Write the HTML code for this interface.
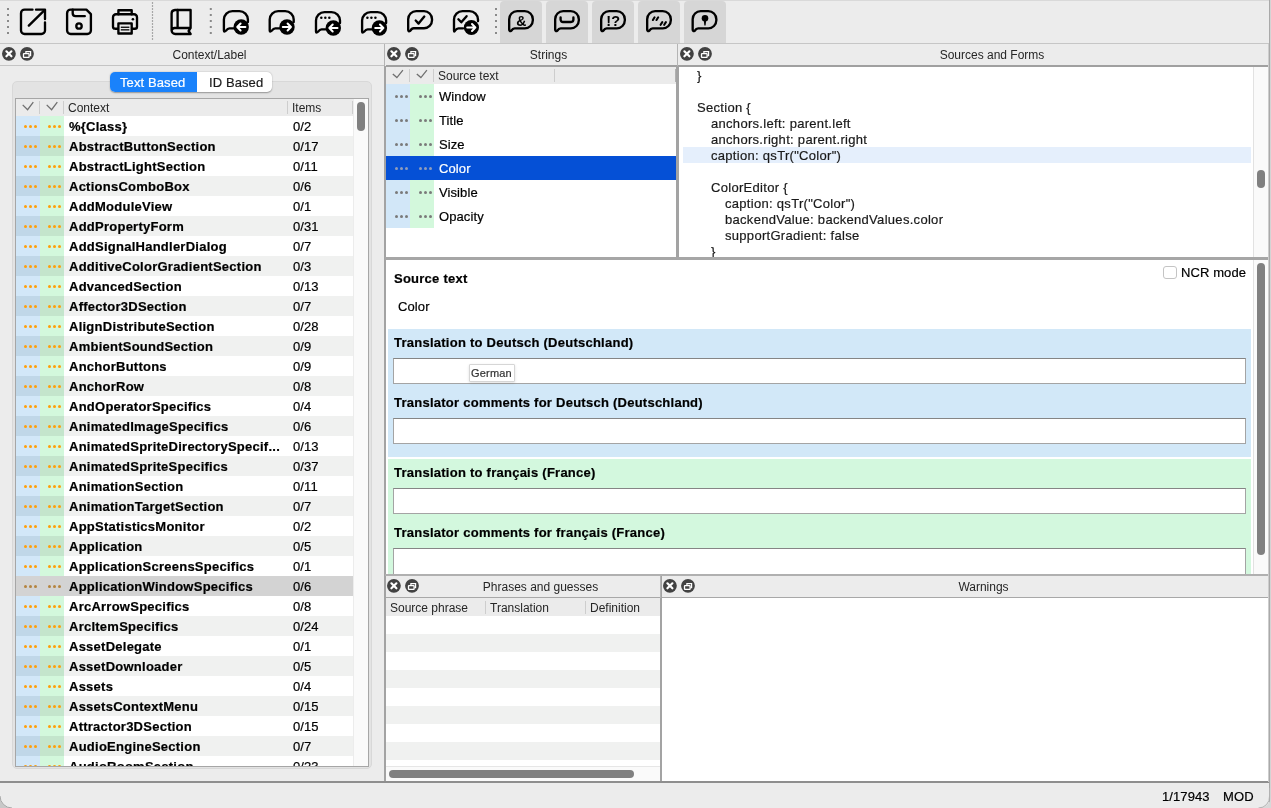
<!DOCTYPE html><html><head><meta charset="utf-8"><style>
*{box-sizing:border-box}
html,body{margin:0;padding:0;width:1271px;height:808px;overflow:hidden;background:#ececec;font-family:"Liberation Sans",sans-serif;color:#000}
.a{position:absolute}
.t{position:absolute;white-space:pre;line-height:1;-webkit-text-stroke:0.2px currentColor}
.dot{position:absolute;border-radius:50%;display:block}
.title{position:absolute;font-size:12px;color:#262626;text-align:center;line-height:1;letter-spacing:0}
#root{position:absolute;left:0;top:0;width:1271px;height:808px;will-change:transform}
</style></head><body><div id="root">

<div class="a" style="left:0px;top:0px;width:1271px;height:1px;background:#d9d9d9;"></div>
<div class="a" style="left:0px;top:43px;width:1271px;height:1px;background:#c6c6c6;"></div>
<div class="a" style="left:500px;top:1px;width:42px;height:42px;background:#d6d6d6;border-radius:4px 4px 0 0"></div>
<div class="a" style="left:546px;top:1px;width:42px;height:42px;background:#d6d6d6;border-radius:4px 4px 0 0"></div>
<div class="a" style="left:592px;top:1px;width:42px;height:42px;background:#d6d6d6;border-radius:4px 4px 0 0"></div>
<div class="a" style="left:638px;top:1px;width:42px;height:42px;background:#d6d6d6;border-radius:4px 4px 0 0"></div>
<div class="a" style="left:684px;top:1px;width:42px;height:42px;background:#d6d6d6;border-radius:4px 4px 0 0"></div>
<svg class="a" style="left:0;top:0" width="730" height="44" viewBox="0 0 730 44"><rect x="7" y="8" width="2" height="2" fill="#8a8a8a"/><rect x="7" y="14" width="2" height="2" fill="#8a8a8a"/><rect x="7" y="20" width="2" height="2" fill="#8a8a8a"/><rect x="7" y="26" width="2" height="2" fill="#8a8a8a"/><rect x="7" y="32" width="2" height="2" fill="#8a8a8a"/><rect x="209.8" y="8" width="2" height="2" fill="#8a8a8a"/><rect x="209.8" y="14" width="2" height="2" fill="#8a8a8a"/><rect x="209.8" y="20" width="2" height="2" fill="#8a8a8a"/><rect x="209.8" y="26" width="2" height="2" fill="#8a8a8a"/><rect x="209.8" y="32" width="2" height="2" fill="#8a8a8a"/><rect x="495" y="8" width="2" height="2" fill="#8a8a8a"/><rect x="495" y="14" width="2" height="2" fill="#8a8a8a"/><rect x="495" y="20" width="2" height="2" fill="#8a8a8a"/><rect x="495" y="26" width="2" height="2" fill="#8a8a8a"/><rect x="495" y="32" width="2" height="2" fill="#8a8a8a"/><rect x="151.9" y="2.4" width="1.2" height="1.2" fill="#7a7a7a"/><rect x="151.9" y="5.4" width="1.2" height="1.2" fill="#7a7a7a"/><rect x="151.9" y="8.4" width="1.2" height="1.2" fill="#7a7a7a"/><rect x="151.9" y="11.4" width="1.2" height="1.2" fill="#7a7a7a"/><rect x="151.9" y="14.4" width="1.2" height="1.2" fill="#7a7a7a"/><rect x="151.9" y="17.4" width="1.2" height="1.2" fill="#7a7a7a"/><rect x="151.9" y="20.4" width="1.2" height="1.2" fill="#7a7a7a"/><rect x="151.9" y="23.4" width="1.2" height="1.2" fill="#7a7a7a"/><rect x="151.9" y="26.4" width="1.2" height="1.2" fill="#7a7a7a"/><rect x="151.9" y="29.4" width="1.2" height="1.2" fill="#7a7a7a"/><rect x="151.9" y="32.4" width="1.2" height="1.2" fill="#7a7a7a"/><rect x="151.9" y="35.4" width="1.2" height="1.2" fill="#7a7a7a"/><rect x="151.9" y="38.4" width="1.2" height="1.2" fill="#7a7a7a"/><path fill="none" stroke="#000" stroke-width="2.35" stroke-linecap="round" stroke-linejoin="round" stroke-linecap="butt" d="M32.5 9.6 H24.6 A3.6 3.6 0 0 0 21 13.2 V30.4 A3.6 3.6 0 0 0 24.6 34 H41.4 A3.6 3.6 0 0 0 45 30.4 V22.3"/><path fill="none" stroke="#000" stroke-width="2.35" stroke-linecap="round" stroke-linejoin="round" d="M28.8 25.6 L43.8 10.8"/><path fill="none" stroke="#000" stroke-width="2.35" stroke-linecap="round" stroke-linejoin="round" stroke-linecap="butt" d="M36 9.6 H45 V19"/><path fill="none" stroke="#000" stroke-width="2.35" stroke-linecap="round" stroke-linejoin="round" d="M70.7 9.6 H86.4 L90.9 14.1 V30.4 A3.6 3.6 0 0 1 87.3 34 H70.7 A3.6 3.6 0 0 1 67.1 30.4 V13.2 A3.6 3.6 0 0 1 70.7 9.6 Z"/><path fill="none" stroke="#000" stroke-width="2.35" stroke-linecap="round" stroke-linejoin="round" d="M72.7 9.6 V13.3 A2.8 2.8 0 0 0 75.5 16.1 H84.8"/><circle cx="79" cy="26" r="2.7" fill="none" stroke="#000" stroke-width="2.35" stroke-linecap="round" stroke-linejoin="round"/><path fill="none" stroke="#000" stroke-width="2.35" stroke-linecap="round" stroke-linejoin="round" d="M118.4 14.2 V10.2 H131.7 V14.2"/><path fill="none" stroke="#000" stroke-width="2.35" stroke-linecap="round" stroke-linejoin="round" d="M117.6 28.7 H114.9 A2 2 0 0 1 113 26.7 V17.2 A3 3 0 0 1 116 14.2 H134 A3 3 0 0 1 137 17.2 V26.7 A2 2 0 0 1 135 28.7 H132.5"/><rect x="118.4" y="23.4" width="13.3" height="10.1" fill="none" stroke="#000" stroke-width="2.35" stroke-linecap="round" stroke-linejoin="round"/><rect x="120.8" y="26.6" width="8.6" height="1.3" fill="#000"/><rect x="120.8" y="29.2" width="8.6" height="1.3" fill="#000"/><circle cx="132.9" cy="19.3" r="1.3" fill="#000"/><path fill="none" stroke="#000" stroke-width="2.35" stroke-linecap="round" stroke-linejoin="round" d="M190.6 28 V10 H175 A3.6 3.6 0 0 0 171.6 13.6 V30.5 A3.6 3.6 0 0 0 175.2 34 H190.6 L188.6 31 L190.6 28 H175.2 A3.3 3.3 0 0 0 171.6 30.5"/><path fill="none" stroke="#000" stroke-width="2.35" stroke-linecap="round" stroke-linejoin="round" d="M177.6 10 V27.5"/><path fill="none" stroke="#000" stroke-width="2.35" stroke-linecap="round" stroke-linejoin="round" d="M234.90 28.30 H229.50 Q227.50 28.30 226.20 30.50 Q223.90 32.70 223.90 30.50 V19.60 A8.5 8.5 0 0 1 232.40 11.10 H239.40 A8.5 8.5 0 0 1 247.90 19.60 V22.10"/><circle cx="241.20" cy="27.00" r="7.7" fill="#000"/><path fill="none" stroke="#fff" stroke-width="2" stroke-linecap="round" stroke-linejoin="round" d="M245.40 27.00 H237.20 M240.60 23.50 L237.20 27.00 L240.60 30.50"/><path fill="none" stroke="#000" stroke-width="2.35" stroke-linecap="round" stroke-linejoin="round" d="M280.70 28.30 H275.30 Q273.30 28.30 272.00 30.50 Q269.70 32.70 269.70 30.50 V19.60 A8.5 8.5 0 0 1 278.20 11.10 H285.20 A8.5 8.5 0 0 1 293.70 19.60 V22.10"/><circle cx="287.00" cy="27.00" r="7.7" fill="#000"/><path fill="none" stroke="#fff" stroke-width="2" stroke-linecap="round" stroke-linejoin="round" d="M282.80 27.00 H291.00 M287.60 23.50 L291.00 27.00 L287.60 30.50"/><path fill="none" stroke="#000" stroke-width="2.35" stroke-linecap="round" stroke-linejoin="round" d="M327.00 29.30 H321.60 Q319.60 29.30 318.30 31.50 Q316.00 33.70 316.00 31.50 V20.60 A8.5 8.5 0 0 1 324.50 12.10 H331.50 A8.5 8.5 0 0 1 340.00 20.60 V23.10"/><circle cx="333.30" cy="28.00" r="7.7" fill="#000"/><path fill="none" stroke="#fff" stroke-width="2" stroke-linecap="round" stroke-linejoin="round" d="M337.50 28.00 H329.30 M332.70 24.50 L329.30 28.00 L332.70 31.50"/><circle cx="321.30" cy="17.80" r="1.25" fill="#000"/><circle cx="325.30" cy="17.80" r="1.25" fill="#000"/><circle cx="329.30" cy="17.80" r="1.25" fill="#000"/><path fill="none" stroke="#000" stroke-width="2.35" stroke-linecap="round" stroke-linejoin="round" d="M373.10 29.30 H367.70 Q365.70 29.30 364.40 31.50 Q362.10 33.70 362.10 31.50 V20.60 A8.5 8.5 0 0 1 370.60 12.10 H377.60 A8.5 8.5 0 0 1 386.10 20.60 V23.10"/><circle cx="379.40" cy="28.00" r="7.7" fill="#000"/><path fill="none" stroke="#fff" stroke-width="2" stroke-linecap="round" stroke-linejoin="round" d="M375.20 28.00 H383.40 M380.00 24.50 L383.40 28.00 L380.00 31.50"/><circle cx="367.40" cy="17.80" r="1.25" fill="#000"/><circle cx="371.40" cy="17.80" r="1.25" fill="#000"/><circle cx="375.40" cy="17.80" r="1.25" fill="#000"/><path fill="none" stroke="#000" stroke-width="2.35" stroke-linecap="round" stroke-linejoin="round" d="M410.38 30.82 Q408.18 32.02 408.18 29.82 V19.18 A8 8 0 0 1 416.18 11.18 H424.02 A8 8 0 0 1 432.02 19.18 V20.22 A8 8 0 0 1 424.02 28.22 H413.68 Q411.68 28.22 410.38 30.82 Z"/><path fill="none" stroke="#000" stroke-width="2.35" stroke-linecap="round" stroke-linejoin="round" d="M415.7 20.5 L418.6 23.6 L424.3 16.6"/><path fill="none" stroke="#000" stroke-width="2.35" stroke-linecap="round" stroke-linejoin="round" d="M463 28.3 H458.5 Q456.5 28.3 455.2 30.5 Q454 32.6 454 30.5 V19.6 A8.5 8.5 0 0 1 462.5 11.1 H469.5 A8.5 8.5 0 0 1 478 19.6 V21"/><path fill="none" stroke="#000" stroke-width="2.35" stroke-linecap="round" stroke-linejoin="round" d="M458.4 19.3 L461.3 22.3 L466.6 16.2"/><circle cx="471.4" cy="27.5" r="7.6" fill="#000"/><path fill="none" stroke="#fff" stroke-width="2" stroke-linecap="round" stroke-linejoin="round" d="M467.2 27.5 H475.4 M472 24 L475.4 27.5 L472 31"/><path fill="none" stroke="#000" stroke-width="2.35" stroke-linecap="round" stroke-linejoin="round" d="M511.38 30.62 Q509.18 31.82 509.18 29.62 V19.18 A8 8 0 0 1 517.17 11.18 H524.83 A8 8 0 0 1 532.83 19.18 V20.32 A8 8 0 0 1 524.83 28.32 H514.67 Q512.67 28.32 511.38 30.62 Z"/><path fill="none" stroke="#000" stroke-width="2.35" stroke-linecap="round" stroke-linejoin="round" d="M557.38 30.62 Q555.17 31.82 555.17 29.62 V19.18 A8 8 0 0 1 563.17 11.18 H570.83 A8 8 0 0 1 578.83 19.18 V20.32 A8 8 0 0 1 570.83 28.32 H560.67 Q558.67 28.32 557.38 30.62 Z"/><path fill="none" stroke="#000" stroke-width="2.35" stroke-linecap="round" stroke-linejoin="round" d="M603.38 30.62 Q601.17 31.82 601.17 29.62 V19.18 A8 8 0 0 1 609.17 11.18 H616.83 A8 8 0 0 1 624.83 19.18 V20.32 A8 8 0 0 1 616.83 28.32 H606.67 Q604.67 28.32 603.38 30.62 Z"/><path fill="none" stroke="#000" stroke-width="2.35" stroke-linecap="round" stroke-linejoin="round" d="M649.38 30.62 Q647.17 31.82 647.17 29.62 V19.18 A8 8 0 0 1 655.17 11.18 H662.83 A8 8 0 0 1 670.83 19.18 V20.32 A8 8 0 0 1 662.83 28.32 H652.67 Q650.67 28.32 649.38 30.62 Z"/><path fill="none" stroke="#000" stroke-width="2.35" stroke-linecap="round" stroke-linejoin="round" d="M694.88 30.62 Q692.67 31.82 692.67 29.62 V19.18 A8 8 0 0 1 700.67 11.18 H708.33 A8 8 0 0 1 716.33 19.18 V20.32 A8 8 0 0 1 708.33 28.32 H698.17 Q696.17 28.32 694.88 30.62 Z"/><text x="521.4" y="25.7" text-anchor="middle" font-family="Liberation Sans" font-weight="bold" font-size="14" fill="#000">&amp;</text><path fill="none" stroke="#000" stroke-width="2.35" stroke-linecap="round" stroke-linejoin="round" d="M560.6 17.5 V19.6 A2.4 2.4 0 0 0 563 22 H571 A2.4 2.4 0 0 0 573.4 19.6 V17.5"/><text x="613.2" y="25.8" text-anchor="middle" font-family="Liberation Sans" font-weight="bold" font-size="14.5" fill="#000">!?</text><path fill="none" stroke="#000" stroke-width="2.1" stroke-linecap="round" d="M652.9 20 L654.6 17.3 M656.5 20 L658.2 17.3 M660.6 24.8 L662.3 22.1 M664.2 24.8 L665.9 22.1"/><circle cx="705" cy="18.3" r="3.3" fill="#000"/><path d="M703.6 19 H706.4 L705.6 25.6 H704.4 Z" fill="#000"/></svg>
<div class="a" style="left:0px;top:65px;width:384px;height:1px;background:#c4c4c4;"></div>
<svg class="a" style="left:0px;top:44px" width="36" height="22" viewBox="0 44 36 22"><circle cx="8.9" cy="53.8" r="6.9" fill="#424242"/><circle cx="27" cy="53.8" r="6.9" fill="#424242"/><path d="M6.4 51.3 L11.4 56.3 M11.4 51.3 L6.4 56.3" stroke="#fff" stroke-width="2.2" stroke-linecap="round"/><path d="M25.9 52.9 V51.599999999999994 H30.6 V55.599999999999994 H29.6" fill="none" stroke="#fff" stroke-width="1.2"/><rect x="23.5" y="53.599999999999994" width="5.6" height="3.8" fill="none" stroke="#fff" stroke-width="1.3" rx="0.5"/></svg><div class="title" style="left:36px;top:49px;width:347px">Context/Label</div>
<div class="a" style="left:12px;top:81px;width:360px;height:688px;background:#e3e3e3;border:1px solid #d8d8d8;border-radius:5px"></div>
<div class="a" style="left:110px;top:72px;width:162px;height:20px;background:#fff;border-radius:5px;box-shadow:0 0.5px 1.5px rgba(0,0,0,.35)"></div>
<div class="a" style="left:110px;top:72px;width:87px;height:20px;background:#1a82fb;border-radius:5px 0 0 5px"></div>
<div class="t" style="left:120px;top:76px;font-size:13px;color:#fff;letter-spacing:0.1px;">Text Based</div>
<div class="t" style="left:209px;top:76px;font-size:13px;color:#1d1d1d;letter-spacing:0.1px;">ID Based</div>
<div class="a" style="left:15px;top:98px;width:354px;height:669px;background:#fff;border:1px solid #a6a6a6;overflow:hidden">
<div class="a" style="left:0px;top:0px;width:337px;height:17px;background:#ebebeb;"></div>
<div class="a" style="left:23px;top:2px;width:1px;height:13px;background:#cdcdcd;"></div>
<div class="a" style="left:47px;top:2px;width:1px;height:13px;background:#cdcdcd;"></div>
<div class="a" style="left:271px;top:2px;width:1px;height:13px;background:#cdcdcd;"></div>
<div class="a" style="left:336px;top:2px;width:1px;height:13px;background:#cdcdcd;"></div>
<div class="t" style="left:52px;top:3px;font-size:12px;color:#262626;letter-spacing:0px;-webkit-text-stroke:0">Context</div>
<div class="t" style="left:276px;top:3px;font-size:12px;color:#262626;letter-spacing:0px;-webkit-text-stroke:0">Items</div>
<svg class="a" style="left:0;top:0" width="60" height="17" viewBox="16 99 60 17"><path fill="none" stroke="#707070" stroke-width="1.3" d="M22.7 104.9 L27.6 109.7 L33.3 102.1 M46.7 104.9 L51.6 109.7 L57.3 102.1"/></svg>
<div class="a" style="left:0px;top:17px;width:337px;height:20px;background:#ffffff;"></div>
<div class="a" style="left:0px;top:17px;width:24px;height:20px;background:#d2e7f8;"></div>
<div class="a" style="left:24px;top:17px;width:24px;height:20px;background:#d3f8dc;"></div>
<i class="dot" style="left:8.30px;top:25.50px;width:3.1px;height:3.1px;background:#ff9f0a"></i><i class="dot" style="left:13.30px;top:25.50px;width:3.1px;height:3.1px;background:#ff9f0a"></i><i class="dot" style="left:18.30px;top:25.50px;width:3.1px;height:3.1px;background:#ff9f0a"></i>
<i class="dot" style="left:32.30px;top:25.50px;width:3.1px;height:3.1px;background:#ff9f0a"></i><i class="dot" style="left:37.30px;top:25.50px;width:3.1px;height:3.1px;background:#ff9f0a"></i><i class="dot" style="left:42.30px;top:25.50px;width:3.1px;height:3.1px;background:#ff9f0a"></i>
<div class="t" style="left:53px;top:21px;font-size:13px;font-weight:bold;color:#000;letter-spacing:0.25px;">%{Class}</div>
<div class="t" style="left:277px;top:21px;font-size:13px;color:#000;letter-spacing:0.1px;">0/2</div>
<div class="a" style="left:0px;top:37px;width:337px;height:20px;background:#f0f1f0;"></div>
<div class="a" style="left:0px;top:37px;width:24px;height:20px;background:#c0d7e8;"></div>
<div class="a" style="left:24px;top:37px;width:24px;height:20px;background:#c4e5cc;"></div>
<i class="dot" style="left:8.30px;top:45.50px;width:3.1px;height:3.1px;background:#ff9f0a"></i><i class="dot" style="left:13.30px;top:45.50px;width:3.1px;height:3.1px;background:#ff9f0a"></i><i class="dot" style="left:18.30px;top:45.50px;width:3.1px;height:3.1px;background:#ff9f0a"></i>
<i class="dot" style="left:32.30px;top:45.50px;width:3.1px;height:3.1px;background:#ff9f0a"></i><i class="dot" style="left:37.30px;top:45.50px;width:3.1px;height:3.1px;background:#ff9f0a"></i><i class="dot" style="left:42.30px;top:45.50px;width:3.1px;height:3.1px;background:#ff9f0a"></i>
<div class="t" style="left:53px;top:41px;font-size:13px;font-weight:bold;color:#000;letter-spacing:0.25px;">AbstractButtonSection</div>
<div class="t" style="left:277px;top:41px;font-size:13px;color:#000;letter-spacing:0.1px;">0/17</div>
<div class="a" style="left:0px;top:57px;width:337px;height:20px;background:#ffffff;"></div>
<div class="a" style="left:0px;top:57px;width:24px;height:20px;background:#d2e7f8;"></div>
<div class="a" style="left:24px;top:57px;width:24px;height:20px;background:#d3f8dc;"></div>
<i class="dot" style="left:8.30px;top:65.50px;width:3.1px;height:3.1px;background:#ff9f0a"></i><i class="dot" style="left:13.30px;top:65.50px;width:3.1px;height:3.1px;background:#ff9f0a"></i><i class="dot" style="left:18.30px;top:65.50px;width:3.1px;height:3.1px;background:#ff9f0a"></i>
<i class="dot" style="left:32.30px;top:65.50px;width:3.1px;height:3.1px;background:#ff9f0a"></i><i class="dot" style="left:37.30px;top:65.50px;width:3.1px;height:3.1px;background:#ff9f0a"></i><i class="dot" style="left:42.30px;top:65.50px;width:3.1px;height:3.1px;background:#ff9f0a"></i>
<div class="t" style="left:53px;top:61px;font-size:13px;font-weight:bold;color:#000;letter-spacing:0.25px;">AbstractLightSection</div>
<div class="t" style="left:277px;top:61px;font-size:13px;color:#000;letter-spacing:0.1px;">0/11</div>
<div class="a" style="left:0px;top:77px;width:337px;height:20px;background:#f0f1f0;"></div>
<div class="a" style="left:0px;top:77px;width:24px;height:20px;background:#c0d7e8;"></div>
<div class="a" style="left:24px;top:77px;width:24px;height:20px;background:#c4e5cc;"></div>
<i class="dot" style="left:8.30px;top:85.50px;width:3.1px;height:3.1px;background:#ff9f0a"></i><i class="dot" style="left:13.30px;top:85.50px;width:3.1px;height:3.1px;background:#ff9f0a"></i><i class="dot" style="left:18.30px;top:85.50px;width:3.1px;height:3.1px;background:#ff9f0a"></i>
<i class="dot" style="left:32.30px;top:85.50px;width:3.1px;height:3.1px;background:#ff9f0a"></i><i class="dot" style="left:37.30px;top:85.50px;width:3.1px;height:3.1px;background:#ff9f0a"></i><i class="dot" style="left:42.30px;top:85.50px;width:3.1px;height:3.1px;background:#ff9f0a"></i>
<div class="t" style="left:53px;top:81px;font-size:13px;font-weight:bold;color:#000;letter-spacing:0.25px;">ActionsComboBox</div>
<div class="t" style="left:277px;top:81px;font-size:13px;color:#000;letter-spacing:0.1px;">0/6</div>
<div class="a" style="left:0px;top:97px;width:337px;height:20px;background:#ffffff;"></div>
<div class="a" style="left:0px;top:97px;width:24px;height:20px;background:#d2e7f8;"></div>
<div class="a" style="left:24px;top:97px;width:24px;height:20px;background:#d3f8dc;"></div>
<i class="dot" style="left:8.30px;top:105.50px;width:3.1px;height:3.1px;background:#ff9f0a"></i><i class="dot" style="left:13.30px;top:105.50px;width:3.1px;height:3.1px;background:#ff9f0a"></i><i class="dot" style="left:18.30px;top:105.50px;width:3.1px;height:3.1px;background:#ff9f0a"></i>
<i class="dot" style="left:32.30px;top:105.50px;width:3.1px;height:3.1px;background:#ff9f0a"></i><i class="dot" style="left:37.30px;top:105.50px;width:3.1px;height:3.1px;background:#ff9f0a"></i><i class="dot" style="left:42.30px;top:105.50px;width:3.1px;height:3.1px;background:#ff9f0a"></i>
<div class="t" style="left:53px;top:101px;font-size:13px;font-weight:bold;color:#000;letter-spacing:0.25px;">AddModuleView</div>
<div class="t" style="left:277px;top:101px;font-size:13px;color:#000;letter-spacing:0.1px;">0/1</div>
<div class="a" style="left:0px;top:117px;width:337px;height:20px;background:#f0f1f0;"></div>
<div class="a" style="left:0px;top:117px;width:24px;height:20px;background:#c0d7e8;"></div>
<div class="a" style="left:24px;top:117px;width:24px;height:20px;background:#c4e5cc;"></div>
<i class="dot" style="left:8.30px;top:125.50px;width:3.1px;height:3.1px;background:#ff9f0a"></i><i class="dot" style="left:13.30px;top:125.50px;width:3.1px;height:3.1px;background:#ff9f0a"></i><i class="dot" style="left:18.30px;top:125.50px;width:3.1px;height:3.1px;background:#ff9f0a"></i>
<i class="dot" style="left:32.30px;top:125.50px;width:3.1px;height:3.1px;background:#ff9f0a"></i><i class="dot" style="left:37.30px;top:125.50px;width:3.1px;height:3.1px;background:#ff9f0a"></i><i class="dot" style="left:42.30px;top:125.50px;width:3.1px;height:3.1px;background:#ff9f0a"></i>
<div class="t" style="left:53px;top:121px;font-size:13px;font-weight:bold;color:#000;letter-spacing:0.25px;">AddPropertyForm</div>
<div class="t" style="left:277px;top:121px;font-size:13px;color:#000;letter-spacing:0.1px;">0/31</div>
<div class="a" style="left:0px;top:137px;width:337px;height:20px;background:#ffffff;"></div>
<div class="a" style="left:0px;top:137px;width:24px;height:20px;background:#d2e7f8;"></div>
<div class="a" style="left:24px;top:137px;width:24px;height:20px;background:#d3f8dc;"></div>
<i class="dot" style="left:8.30px;top:145.50px;width:3.1px;height:3.1px;background:#ff9f0a"></i><i class="dot" style="left:13.30px;top:145.50px;width:3.1px;height:3.1px;background:#ff9f0a"></i><i class="dot" style="left:18.30px;top:145.50px;width:3.1px;height:3.1px;background:#ff9f0a"></i>
<i class="dot" style="left:32.30px;top:145.50px;width:3.1px;height:3.1px;background:#ff9f0a"></i><i class="dot" style="left:37.30px;top:145.50px;width:3.1px;height:3.1px;background:#ff9f0a"></i><i class="dot" style="left:42.30px;top:145.50px;width:3.1px;height:3.1px;background:#ff9f0a"></i>
<div class="t" style="left:53px;top:141px;font-size:13px;font-weight:bold;color:#000;letter-spacing:0.25px;">AddSignalHandlerDialog</div>
<div class="t" style="left:277px;top:141px;font-size:13px;color:#000;letter-spacing:0.1px;">0/7</div>
<div class="a" style="left:0px;top:157px;width:337px;height:20px;background:#f0f1f0;"></div>
<div class="a" style="left:0px;top:157px;width:24px;height:20px;background:#c0d7e8;"></div>
<div class="a" style="left:24px;top:157px;width:24px;height:20px;background:#c4e5cc;"></div>
<i class="dot" style="left:8.30px;top:165.50px;width:3.1px;height:3.1px;background:#ff9f0a"></i><i class="dot" style="left:13.30px;top:165.50px;width:3.1px;height:3.1px;background:#ff9f0a"></i><i class="dot" style="left:18.30px;top:165.50px;width:3.1px;height:3.1px;background:#ff9f0a"></i>
<i class="dot" style="left:32.30px;top:165.50px;width:3.1px;height:3.1px;background:#ff9f0a"></i><i class="dot" style="left:37.30px;top:165.50px;width:3.1px;height:3.1px;background:#ff9f0a"></i><i class="dot" style="left:42.30px;top:165.50px;width:3.1px;height:3.1px;background:#ff9f0a"></i>
<div class="t" style="left:53px;top:161px;font-size:13px;font-weight:bold;color:#000;letter-spacing:0.25px;">AdditiveColorGradientSection</div>
<div class="t" style="left:277px;top:161px;font-size:13px;color:#000;letter-spacing:0.1px;">0/3</div>
<div class="a" style="left:0px;top:177px;width:337px;height:20px;background:#ffffff;"></div>
<div class="a" style="left:0px;top:177px;width:24px;height:20px;background:#d2e7f8;"></div>
<div class="a" style="left:24px;top:177px;width:24px;height:20px;background:#d3f8dc;"></div>
<i class="dot" style="left:8.30px;top:185.50px;width:3.1px;height:3.1px;background:#ff9f0a"></i><i class="dot" style="left:13.30px;top:185.50px;width:3.1px;height:3.1px;background:#ff9f0a"></i><i class="dot" style="left:18.30px;top:185.50px;width:3.1px;height:3.1px;background:#ff9f0a"></i>
<i class="dot" style="left:32.30px;top:185.50px;width:3.1px;height:3.1px;background:#ff9f0a"></i><i class="dot" style="left:37.30px;top:185.50px;width:3.1px;height:3.1px;background:#ff9f0a"></i><i class="dot" style="left:42.30px;top:185.50px;width:3.1px;height:3.1px;background:#ff9f0a"></i>
<div class="t" style="left:53px;top:181px;font-size:13px;font-weight:bold;color:#000;letter-spacing:0.25px;">AdvancedSection</div>
<div class="t" style="left:277px;top:181px;font-size:13px;color:#000;letter-spacing:0.1px;">0/13</div>
<div class="a" style="left:0px;top:197px;width:337px;height:20px;background:#f0f1f0;"></div>
<div class="a" style="left:0px;top:197px;width:24px;height:20px;background:#c0d7e8;"></div>
<div class="a" style="left:24px;top:197px;width:24px;height:20px;background:#c4e5cc;"></div>
<i class="dot" style="left:8.30px;top:205.50px;width:3.1px;height:3.1px;background:#ff9f0a"></i><i class="dot" style="left:13.30px;top:205.50px;width:3.1px;height:3.1px;background:#ff9f0a"></i><i class="dot" style="left:18.30px;top:205.50px;width:3.1px;height:3.1px;background:#ff9f0a"></i>
<i class="dot" style="left:32.30px;top:205.50px;width:3.1px;height:3.1px;background:#ff9f0a"></i><i class="dot" style="left:37.30px;top:205.50px;width:3.1px;height:3.1px;background:#ff9f0a"></i><i class="dot" style="left:42.30px;top:205.50px;width:3.1px;height:3.1px;background:#ff9f0a"></i>
<div class="t" style="left:53px;top:201px;font-size:13px;font-weight:bold;color:#000;letter-spacing:0.25px;">Affector3DSection</div>
<div class="t" style="left:277px;top:201px;font-size:13px;color:#000;letter-spacing:0.1px;">0/7</div>
<div class="a" style="left:0px;top:217px;width:337px;height:20px;background:#ffffff;"></div>
<div class="a" style="left:0px;top:217px;width:24px;height:20px;background:#d2e7f8;"></div>
<div class="a" style="left:24px;top:217px;width:24px;height:20px;background:#d3f8dc;"></div>
<i class="dot" style="left:8.30px;top:225.50px;width:3.1px;height:3.1px;background:#ff9f0a"></i><i class="dot" style="left:13.30px;top:225.50px;width:3.1px;height:3.1px;background:#ff9f0a"></i><i class="dot" style="left:18.30px;top:225.50px;width:3.1px;height:3.1px;background:#ff9f0a"></i>
<i class="dot" style="left:32.30px;top:225.50px;width:3.1px;height:3.1px;background:#ff9f0a"></i><i class="dot" style="left:37.30px;top:225.50px;width:3.1px;height:3.1px;background:#ff9f0a"></i><i class="dot" style="left:42.30px;top:225.50px;width:3.1px;height:3.1px;background:#ff9f0a"></i>
<div class="t" style="left:53px;top:221px;font-size:13px;font-weight:bold;color:#000;letter-spacing:0.25px;">AlignDistributeSection</div>
<div class="t" style="left:277px;top:221px;font-size:13px;color:#000;letter-spacing:0.1px;">0/28</div>
<div class="a" style="left:0px;top:237px;width:337px;height:20px;background:#f0f1f0;"></div>
<div class="a" style="left:0px;top:237px;width:24px;height:20px;background:#c0d7e8;"></div>
<div class="a" style="left:24px;top:237px;width:24px;height:20px;background:#c4e5cc;"></div>
<i class="dot" style="left:8.30px;top:245.50px;width:3.1px;height:3.1px;background:#ff9f0a"></i><i class="dot" style="left:13.30px;top:245.50px;width:3.1px;height:3.1px;background:#ff9f0a"></i><i class="dot" style="left:18.30px;top:245.50px;width:3.1px;height:3.1px;background:#ff9f0a"></i>
<i class="dot" style="left:32.30px;top:245.50px;width:3.1px;height:3.1px;background:#ff9f0a"></i><i class="dot" style="left:37.30px;top:245.50px;width:3.1px;height:3.1px;background:#ff9f0a"></i><i class="dot" style="left:42.30px;top:245.50px;width:3.1px;height:3.1px;background:#ff9f0a"></i>
<div class="t" style="left:53px;top:241px;font-size:13px;font-weight:bold;color:#000;letter-spacing:0.25px;">AmbientSoundSection</div>
<div class="t" style="left:277px;top:241px;font-size:13px;color:#000;letter-spacing:0.1px;">0/9</div>
<div class="a" style="left:0px;top:257px;width:337px;height:20px;background:#ffffff;"></div>
<div class="a" style="left:0px;top:257px;width:24px;height:20px;background:#d2e7f8;"></div>
<div class="a" style="left:24px;top:257px;width:24px;height:20px;background:#d3f8dc;"></div>
<i class="dot" style="left:8.30px;top:265.50px;width:3.1px;height:3.1px;background:#ff9f0a"></i><i class="dot" style="left:13.30px;top:265.50px;width:3.1px;height:3.1px;background:#ff9f0a"></i><i class="dot" style="left:18.30px;top:265.50px;width:3.1px;height:3.1px;background:#ff9f0a"></i>
<i class="dot" style="left:32.30px;top:265.50px;width:3.1px;height:3.1px;background:#ff9f0a"></i><i class="dot" style="left:37.30px;top:265.50px;width:3.1px;height:3.1px;background:#ff9f0a"></i><i class="dot" style="left:42.30px;top:265.50px;width:3.1px;height:3.1px;background:#ff9f0a"></i>
<div class="t" style="left:53px;top:261px;font-size:13px;font-weight:bold;color:#000;letter-spacing:0.25px;">AnchorButtons</div>
<div class="t" style="left:277px;top:261px;font-size:13px;color:#000;letter-spacing:0.1px;">0/9</div>
<div class="a" style="left:0px;top:277px;width:337px;height:20px;background:#f0f1f0;"></div>
<div class="a" style="left:0px;top:277px;width:24px;height:20px;background:#c0d7e8;"></div>
<div class="a" style="left:24px;top:277px;width:24px;height:20px;background:#c4e5cc;"></div>
<i class="dot" style="left:8.30px;top:285.50px;width:3.1px;height:3.1px;background:#ff9f0a"></i><i class="dot" style="left:13.30px;top:285.50px;width:3.1px;height:3.1px;background:#ff9f0a"></i><i class="dot" style="left:18.30px;top:285.50px;width:3.1px;height:3.1px;background:#ff9f0a"></i>
<i class="dot" style="left:32.30px;top:285.50px;width:3.1px;height:3.1px;background:#ff9f0a"></i><i class="dot" style="left:37.30px;top:285.50px;width:3.1px;height:3.1px;background:#ff9f0a"></i><i class="dot" style="left:42.30px;top:285.50px;width:3.1px;height:3.1px;background:#ff9f0a"></i>
<div class="t" style="left:53px;top:281px;font-size:13px;font-weight:bold;color:#000;letter-spacing:0.25px;">AnchorRow</div>
<div class="t" style="left:277px;top:281px;font-size:13px;color:#000;letter-spacing:0.1px;">0/8</div>
<div class="a" style="left:0px;top:297px;width:337px;height:20px;background:#ffffff;"></div>
<div class="a" style="left:0px;top:297px;width:24px;height:20px;background:#d2e7f8;"></div>
<div class="a" style="left:24px;top:297px;width:24px;height:20px;background:#d3f8dc;"></div>
<i class="dot" style="left:8.30px;top:305.50px;width:3.1px;height:3.1px;background:#ff9f0a"></i><i class="dot" style="left:13.30px;top:305.50px;width:3.1px;height:3.1px;background:#ff9f0a"></i><i class="dot" style="left:18.30px;top:305.50px;width:3.1px;height:3.1px;background:#ff9f0a"></i>
<i class="dot" style="left:32.30px;top:305.50px;width:3.1px;height:3.1px;background:#ff9f0a"></i><i class="dot" style="left:37.30px;top:305.50px;width:3.1px;height:3.1px;background:#ff9f0a"></i><i class="dot" style="left:42.30px;top:305.50px;width:3.1px;height:3.1px;background:#ff9f0a"></i>
<div class="t" style="left:53px;top:301px;font-size:13px;font-weight:bold;color:#000;letter-spacing:0.25px;">AndOperatorSpecifics</div>
<div class="t" style="left:277px;top:301px;font-size:13px;color:#000;letter-spacing:0.1px;">0/4</div>
<div class="a" style="left:0px;top:317px;width:337px;height:20px;background:#f0f1f0;"></div>
<div class="a" style="left:0px;top:317px;width:24px;height:20px;background:#c0d7e8;"></div>
<div class="a" style="left:24px;top:317px;width:24px;height:20px;background:#c4e5cc;"></div>
<i class="dot" style="left:8.30px;top:325.50px;width:3.1px;height:3.1px;background:#ff9f0a"></i><i class="dot" style="left:13.30px;top:325.50px;width:3.1px;height:3.1px;background:#ff9f0a"></i><i class="dot" style="left:18.30px;top:325.50px;width:3.1px;height:3.1px;background:#ff9f0a"></i>
<i class="dot" style="left:32.30px;top:325.50px;width:3.1px;height:3.1px;background:#ff9f0a"></i><i class="dot" style="left:37.30px;top:325.50px;width:3.1px;height:3.1px;background:#ff9f0a"></i><i class="dot" style="left:42.30px;top:325.50px;width:3.1px;height:3.1px;background:#ff9f0a"></i>
<div class="t" style="left:53px;top:321px;font-size:13px;font-weight:bold;color:#000;letter-spacing:0.25px;">AnimatedImageSpecifics</div>
<div class="t" style="left:277px;top:321px;font-size:13px;color:#000;letter-spacing:0.1px;">0/6</div>
<div class="a" style="left:0px;top:337px;width:337px;height:20px;background:#ffffff;"></div>
<div class="a" style="left:0px;top:337px;width:24px;height:20px;background:#d2e7f8;"></div>
<div class="a" style="left:24px;top:337px;width:24px;height:20px;background:#d3f8dc;"></div>
<i class="dot" style="left:8.30px;top:345.50px;width:3.1px;height:3.1px;background:#ff9f0a"></i><i class="dot" style="left:13.30px;top:345.50px;width:3.1px;height:3.1px;background:#ff9f0a"></i><i class="dot" style="left:18.30px;top:345.50px;width:3.1px;height:3.1px;background:#ff9f0a"></i>
<i class="dot" style="left:32.30px;top:345.50px;width:3.1px;height:3.1px;background:#ff9f0a"></i><i class="dot" style="left:37.30px;top:345.50px;width:3.1px;height:3.1px;background:#ff9f0a"></i><i class="dot" style="left:42.30px;top:345.50px;width:3.1px;height:3.1px;background:#ff9f0a"></i>
<div class="t" style="left:53px;top:341px;font-size:13px;font-weight:bold;color:#000;letter-spacing:0.25px;">AnimatedSpriteDirectorySpecif...</div>
<div class="t" style="left:277px;top:341px;font-size:13px;color:#000;letter-spacing:0.1px;">0/13</div>
<div class="a" style="left:0px;top:357px;width:337px;height:20px;background:#f0f1f0;"></div>
<div class="a" style="left:0px;top:357px;width:24px;height:20px;background:#c0d7e8;"></div>
<div class="a" style="left:24px;top:357px;width:24px;height:20px;background:#c4e5cc;"></div>
<i class="dot" style="left:8.30px;top:365.50px;width:3.1px;height:3.1px;background:#ff9f0a"></i><i class="dot" style="left:13.30px;top:365.50px;width:3.1px;height:3.1px;background:#ff9f0a"></i><i class="dot" style="left:18.30px;top:365.50px;width:3.1px;height:3.1px;background:#ff9f0a"></i>
<i class="dot" style="left:32.30px;top:365.50px;width:3.1px;height:3.1px;background:#ff9f0a"></i><i class="dot" style="left:37.30px;top:365.50px;width:3.1px;height:3.1px;background:#ff9f0a"></i><i class="dot" style="left:42.30px;top:365.50px;width:3.1px;height:3.1px;background:#ff9f0a"></i>
<div class="t" style="left:53px;top:361px;font-size:13px;font-weight:bold;color:#000;letter-spacing:0.25px;">AnimatedSpriteSpecifics</div>
<div class="t" style="left:277px;top:361px;font-size:13px;color:#000;letter-spacing:0.1px;">0/37</div>
<div class="a" style="left:0px;top:377px;width:337px;height:20px;background:#ffffff;"></div>
<div class="a" style="left:0px;top:377px;width:24px;height:20px;background:#d2e7f8;"></div>
<div class="a" style="left:24px;top:377px;width:24px;height:20px;background:#d3f8dc;"></div>
<i class="dot" style="left:8.30px;top:385.50px;width:3.1px;height:3.1px;background:#ff9f0a"></i><i class="dot" style="left:13.30px;top:385.50px;width:3.1px;height:3.1px;background:#ff9f0a"></i><i class="dot" style="left:18.30px;top:385.50px;width:3.1px;height:3.1px;background:#ff9f0a"></i>
<i class="dot" style="left:32.30px;top:385.50px;width:3.1px;height:3.1px;background:#ff9f0a"></i><i class="dot" style="left:37.30px;top:385.50px;width:3.1px;height:3.1px;background:#ff9f0a"></i><i class="dot" style="left:42.30px;top:385.50px;width:3.1px;height:3.1px;background:#ff9f0a"></i>
<div class="t" style="left:53px;top:381px;font-size:13px;font-weight:bold;color:#000;letter-spacing:0.25px;">AnimationSection</div>
<div class="t" style="left:277px;top:381px;font-size:13px;color:#000;letter-spacing:0.1px;">0/11</div>
<div class="a" style="left:0px;top:397px;width:337px;height:20px;background:#f0f1f0;"></div>
<div class="a" style="left:0px;top:397px;width:24px;height:20px;background:#c0d7e8;"></div>
<div class="a" style="left:24px;top:397px;width:24px;height:20px;background:#c4e5cc;"></div>
<i class="dot" style="left:8.30px;top:405.50px;width:3.1px;height:3.1px;background:#ff9f0a"></i><i class="dot" style="left:13.30px;top:405.50px;width:3.1px;height:3.1px;background:#ff9f0a"></i><i class="dot" style="left:18.30px;top:405.50px;width:3.1px;height:3.1px;background:#ff9f0a"></i>
<i class="dot" style="left:32.30px;top:405.50px;width:3.1px;height:3.1px;background:#ff9f0a"></i><i class="dot" style="left:37.30px;top:405.50px;width:3.1px;height:3.1px;background:#ff9f0a"></i><i class="dot" style="left:42.30px;top:405.50px;width:3.1px;height:3.1px;background:#ff9f0a"></i>
<div class="t" style="left:53px;top:401px;font-size:13px;font-weight:bold;color:#000;letter-spacing:0.25px;">AnimationTargetSection</div>
<div class="t" style="left:277px;top:401px;font-size:13px;color:#000;letter-spacing:0.1px;">0/7</div>
<div class="a" style="left:0px;top:417px;width:337px;height:20px;background:#ffffff;"></div>
<div class="a" style="left:0px;top:417px;width:24px;height:20px;background:#d2e7f8;"></div>
<div class="a" style="left:24px;top:417px;width:24px;height:20px;background:#d3f8dc;"></div>
<i class="dot" style="left:8.30px;top:425.50px;width:3.1px;height:3.1px;background:#ff9f0a"></i><i class="dot" style="left:13.30px;top:425.50px;width:3.1px;height:3.1px;background:#ff9f0a"></i><i class="dot" style="left:18.30px;top:425.50px;width:3.1px;height:3.1px;background:#ff9f0a"></i>
<i class="dot" style="left:32.30px;top:425.50px;width:3.1px;height:3.1px;background:#ff9f0a"></i><i class="dot" style="left:37.30px;top:425.50px;width:3.1px;height:3.1px;background:#ff9f0a"></i><i class="dot" style="left:42.30px;top:425.50px;width:3.1px;height:3.1px;background:#ff9f0a"></i>
<div class="t" style="left:53px;top:421px;font-size:13px;font-weight:bold;color:#000;letter-spacing:0.25px;">AppStatisticsMonitor</div>
<div class="t" style="left:277px;top:421px;font-size:13px;color:#000;letter-spacing:0.1px;">0/2</div>
<div class="a" style="left:0px;top:437px;width:337px;height:20px;background:#f0f1f0;"></div>
<div class="a" style="left:0px;top:437px;width:24px;height:20px;background:#c0d7e8;"></div>
<div class="a" style="left:24px;top:437px;width:24px;height:20px;background:#c4e5cc;"></div>
<i class="dot" style="left:8.30px;top:445.50px;width:3.1px;height:3.1px;background:#ff9f0a"></i><i class="dot" style="left:13.30px;top:445.50px;width:3.1px;height:3.1px;background:#ff9f0a"></i><i class="dot" style="left:18.30px;top:445.50px;width:3.1px;height:3.1px;background:#ff9f0a"></i>
<i class="dot" style="left:32.30px;top:445.50px;width:3.1px;height:3.1px;background:#ff9f0a"></i><i class="dot" style="left:37.30px;top:445.50px;width:3.1px;height:3.1px;background:#ff9f0a"></i><i class="dot" style="left:42.30px;top:445.50px;width:3.1px;height:3.1px;background:#ff9f0a"></i>
<div class="t" style="left:53px;top:441px;font-size:13px;font-weight:bold;color:#000;letter-spacing:0.25px;">Application</div>
<div class="t" style="left:277px;top:441px;font-size:13px;color:#000;letter-spacing:0.1px;">0/5</div>
<div class="a" style="left:0px;top:457px;width:337px;height:20px;background:#ffffff;"></div>
<div class="a" style="left:0px;top:457px;width:24px;height:20px;background:#d2e7f8;"></div>
<div class="a" style="left:24px;top:457px;width:24px;height:20px;background:#d3f8dc;"></div>
<i class="dot" style="left:8.30px;top:465.50px;width:3.1px;height:3.1px;background:#ff9f0a"></i><i class="dot" style="left:13.30px;top:465.50px;width:3.1px;height:3.1px;background:#ff9f0a"></i><i class="dot" style="left:18.30px;top:465.50px;width:3.1px;height:3.1px;background:#ff9f0a"></i>
<i class="dot" style="left:32.30px;top:465.50px;width:3.1px;height:3.1px;background:#ff9f0a"></i><i class="dot" style="left:37.30px;top:465.50px;width:3.1px;height:3.1px;background:#ff9f0a"></i><i class="dot" style="left:42.30px;top:465.50px;width:3.1px;height:3.1px;background:#ff9f0a"></i>
<div class="t" style="left:53px;top:461px;font-size:13px;font-weight:bold;color:#000;letter-spacing:0.25px;">ApplicationScreensSpecifics</div>
<div class="t" style="left:277px;top:461px;font-size:13px;color:#000;letter-spacing:0.1px;">0/1</div>
<div class="a" style="left:0px;top:477px;width:337px;height:20px;background:#d3d3d3;"></div>
<div class="a" style="left:0px;top:477px;width:24px;height:20px;background:#d3d3d3;"></div>
<div class="a" style="left:24px;top:477px;width:24px;height:20px;background:#d3d3d3;"></div>
<i class="dot" style="left:8.30px;top:485.50px;width:3.1px;height:3.1px;background:#b5843f"></i><i class="dot" style="left:13.30px;top:485.50px;width:3.1px;height:3.1px;background:#b5843f"></i><i class="dot" style="left:18.30px;top:485.50px;width:3.1px;height:3.1px;background:#b5843f"></i>
<i class="dot" style="left:32.30px;top:485.50px;width:3.1px;height:3.1px;background:#b5843f"></i><i class="dot" style="left:37.30px;top:485.50px;width:3.1px;height:3.1px;background:#b5843f"></i><i class="dot" style="left:42.30px;top:485.50px;width:3.1px;height:3.1px;background:#b5843f"></i>
<div class="t" style="left:53px;top:481px;font-size:13px;font-weight:bold;color:#000;letter-spacing:0.25px;">ApplicationWindowSpecifics</div>
<div class="t" style="left:277px;top:481px;font-size:13px;color:#000;letter-spacing:0.1px;">0/6</div>
<div class="a" style="left:0px;top:497px;width:337px;height:20px;background:#ffffff;"></div>
<div class="a" style="left:0px;top:497px;width:24px;height:20px;background:#d2e7f8;"></div>
<div class="a" style="left:24px;top:497px;width:24px;height:20px;background:#d3f8dc;"></div>
<i class="dot" style="left:8.30px;top:505.50px;width:3.1px;height:3.1px;background:#ff9f0a"></i><i class="dot" style="left:13.30px;top:505.50px;width:3.1px;height:3.1px;background:#ff9f0a"></i><i class="dot" style="left:18.30px;top:505.50px;width:3.1px;height:3.1px;background:#ff9f0a"></i>
<i class="dot" style="left:32.30px;top:505.50px;width:3.1px;height:3.1px;background:#ff9f0a"></i><i class="dot" style="left:37.30px;top:505.50px;width:3.1px;height:3.1px;background:#ff9f0a"></i><i class="dot" style="left:42.30px;top:505.50px;width:3.1px;height:3.1px;background:#ff9f0a"></i>
<div class="t" style="left:53px;top:501px;font-size:13px;font-weight:bold;color:#000;letter-spacing:0.25px;">ArcArrowSpecifics</div>
<div class="t" style="left:277px;top:501px;font-size:13px;color:#000;letter-spacing:0.1px;">0/8</div>
<div class="a" style="left:0px;top:517px;width:337px;height:20px;background:#f0f1f0;"></div>
<div class="a" style="left:0px;top:517px;width:24px;height:20px;background:#c0d7e8;"></div>
<div class="a" style="left:24px;top:517px;width:24px;height:20px;background:#c4e5cc;"></div>
<i class="dot" style="left:8.30px;top:525.50px;width:3.1px;height:3.1px;background:#ff9f0a"></i><i class="dot" style="left:13.30px;top:525.50px;width:3.1px;height:3.1px;background:#ff9f0a"></i><i class="dot" style="left:18.30px;top:525.50px;width:3.1px;height:3.1px;background:#ff9f0a"></i>
<i class="dot" style="left:32.30px;top:525.50px;width:3.1px;height:3.1px;background:#ff9f0a"></i><i class="dot" style="left:37.30px;top:525.50px;width:3.1px;height:3.1px;background:#ff9f0a"></i><i class="dot" style="left:42.30px;top:525.50px;width:3.1px;height:3.1px;background:#ff9f0a"></i>
<div class="t" style="left:53px;top:521px;font-size:13px;font-weight:bold;color:#000;letter-spacing:0.25px;">ArcItemSpecifics</div>
<div class="t" style="left:277px;top:521px;font-size:13px;color:#000;letter-spacing:0.1px;">0/24</div>
<div class="a" style="left:0px;top:537px;width:337px;height:20px;background:#ffffff;"></div>
<div class="a" style="left:0px;top:537px;width:24px;height:20px;background:#d2e7f8;"></div>
<div class="a" style="left:24px;top:537px;width:24px;height:20px;background:#d3f8dc;"></div>
<i class="dot" style="left:8.30px;top:545.50px;width:3.1px;height:3.1px;background:#ff9f0a"></i><i class="dot" style="left:13.30px;top:545.50px;width:3.1px;height:3.1px;background:#ff9f0a"></i><i class="dot" style="left:18.30px;top:545.50px;width:3.1px;height:3.1px;background:#ff9f0a"></i>
<i class="dot" style="left:32.30px;top:545.50px;width:3.1px;height:3.1px;background:#ff9f0a"></i><i class="dot" style="left:37.30px;top:545.50px;width:3.1px;height:3.1px;background:#ff9f0a"></i><i class="dot" style="left:42.30px;top:545.50px;width:3.1px;height:3.1px;background:#ff9f0a"></i>
<div class="t" style="left:53px;top:541px;font-size:13px;font-weight:bold;color:#000;letter-spacing:0.25px;">AssetDelegate</div>
<div class="t" style="left:277px;top:541px;font-size:13px;color:#000;letter-spacing:0.1px;">0/1</div>
<div class="a" style="left:0px;top:557px;width:337px;height:20px;background:#f0f1f0;"></div>
<div class="a" style="left:0px;top:557px;width:24px;height:20px;background:#c0d7e8;"></div>
<div class="a" style="left:24px;top:557px;width:24px;height:20px;background:#c4e5cc;"></div>
<i class="dot" style="left:8.30px;top:565.50px;width:3.1px;height:3.1px;background:#ff9f0a"></i><i class="dot" style="left:13.30px;top:565.50px;width:3.1px;height:3.1px;background:#ff9f0a"></i><i class="dot" style="left:18.30px;top:565.50px;width:3.1px;height:3.1px;background:#ff9f0a"></i>
<i class="dot" style="left:32.30px;top:565.50px;width:3.1px;height:3.1px;background:#ff9f0a"></i><i class="dot" style="left:37.30px;top:565.50px;width:3.1px;height:3.1px;background:#ff9f0a"></i><i class="dot" style="left:42.30px;top:565.50px;width:3.1px;height:3.1px;background:#ff9f0a"></i>
<div class="t" style="left:53px;top:561px;font-size:13px;font-weight:bold;color:#000;letter-spacing:0.25px;">AssetDownloader</div>
<div class="t" style="left:277px;top:561px;font-size:13px;color:#000;letter-spacing:0.1px;">0/5</div>
<div class="a" style="left:0px;top:577px;width:337px;height:20px;background:#ffffff;"></div>
<div class="a" style="left:0px;top:577px;width:24px;height:20px;background:#d2e7f8;"></div>
<div class="a" style="left:24px;top:577px;width:24px;height:20px;background:#d3f8dc;"></div>
<i class="dot" style="left:8.30px;top:585.50px;width:3.1px;height:3.1px;background:#ff9f0a"></i><i class="dot" style="left:13.30px;top:585.50px;width:3.1px;height:3.1px;background:#ff9f0a"></i><i class="dot" style="left:18.30px;top:585.50px;width:3.1px;height:3.1px;background:#ff9f0a"></i>
<i class="dot" style="left:32.30px;top:585.50px;width:3.1px;height:3.1px;background:#ff9f0a"></i><i class="dot" style="left:37.30px;top:585.50px;width:3.1px;height:3.1px;background:#ff9f0a"></i><i class="dot" style="left:42.30px;top:585.50px;width:3.1px;height:3.1px;background:#ff9f0a"></i>
<div class="t" style="left:53px;top:581px;font-size:13px;font-weight:bold;color:#000;letter-spacing:0.25px;">Assets</div>
<div class="t" style="left:277px;top:581px;font-size:13px;color:#000;letter-spacing:0.1px;">0/4</div>
<div class="a" style="left:0px;top:597px;width:337px;height:20px;background:#f0f1f0;"></div>
<div class="a" style="left:0px;top:597px;width:24px;height:20px;background:#c0d7e8;"></div>
<div class="a" style="left:24px;top:597px;width:24px;height:20px;background:#c4e5cc;"></div>
<i class="dot" style="left:8.30px;top:605.50px;width:3.1px;height:3.1px;background:#ff9f0a"></i><i class="dot" style="left:13.30px;top:605.50px;width:3.1px;height:3.1px;background:#ff9f0a"></i><i class="dot" style="left:18.30px;top:605.50px;width:3.1px;height:3.1px;background:#ff9f0a"></i>
<i class="dot" style="left:32.30px;top:605.50px;width:3.1px;height:3.1px;background:#ff9f0a"></i><i class="dot" style="left:37.30px;top:605.50px;width:3.1px;height:3.1px;background:#ff9f0a"></i><i class="dot" style="left:42.30px;top:605.50px;width:3.1px;height:3.1px;background:#ff9f0a"></i>
<div class="t" style="left:53px;top:601px;font-size:13px;font-weight:bold;color:#000;letter-spacing:0.25px;">AssetsContextMenu</div>
<div class="t" style="left:277px;top:601px;font-size:13px;color:#000;letter-spacing:0.1px;">0/15</div>
<div class="a" style="left:0px;top:617px;width:337px;height:20px;background:#ffffff;"></div>
<div class="a" style="left:0px;top:617px;width:24px;height:20px;background:#d2e7f8;"></div>
<div class="a" style="left:24px;top:617px;width:24px;height:20px;background:#d3f8dc;"></div>
<i class="dot" style="left:8.30px;top:625.50px;width:3.1px;height:3.1px;background:#ff9f0a"></i><i class="dot" style="left:13.30px;top:625.50px;width:3.1px;height:3.1px;background:#ff9f0a"></i><i class="dot" style="left:18.30px;top:625.50px;width:3.1px;height:3.1px;background:#ff9f0a"></i>
<i class="dot" style="left:32.30px;top:625.50px;width:3.1px;height:3.1px;background:#ff9f0a"></i><i class="dot" style="left:37.30px;top:625.50px;width:3.1px;height:3.1px;background:#ff9f0a"></i><i class="dot" style="left:42.30px;top:625.50px;width:3.1px;height:3.1px;background:#ff9f0a"></i>
<div class="t" style="left:53px;top:621px;font-size:13px;font-weight:bold;color:#000;letter-spacing:0.25px;">Attractor3DSection</div>
<div class="t" style="left:277px;top:621px;font-size:13px;color:#000;letter-spacing:0.1px;">0/15</div>
<div class="a" style="left:0px;top:637px;width:337px;height:20px;background:#f0f1f0;"></div>
<div class="a" style="left:0px;top:637px;width:24px;height:20px;background:#c0d7e8;"></div>
<div class="a" style="left:24px;top:637px;width:24px;height:20px;background:#c4e5cc;"></div>
<i class="dot" style="left:8.30px;top:645.50px;width:3.1px;height:3.1px;background:#ff9f0a"></i><i class="dot" style="left:13.30px;top:645.50px;width:3.1px;height:3.1px;background:#ff9f0a"></i><i class="dot" style="left:18.30px;top:645.50px;width:3.1px;height:3.1px;background:#ff9f0a"></i>
<i class="dot" style="left:32.30px;top:645.50px;width:3.1px;height:3.1px;background:#ff9f0a"></i><i class="dot" style="left:37.30px;top:645.50px;width:3.1px;height:3.1px;background:#ff9f0a"></i><i class="dot" style="left:42.30px;top:645.50px;width:3.1px;height:3.1px;background:#ff9f0a"></i>
<div class="t" style="left:53px;top:641px;font-size:13px;font-weight:bold;color:#000;letter-spacing:0.25px;">AudioEngineSection</div>
<div class="t" style="left:277px;top:641px;font-size:13px;color:#000;letter-spacing:0.1px;">0/7</div>
<div class="a" style="left:0px;top:657px;width:337px;height:20px;background:#ffffff;"></div>
<div class="a" style="left:0px;top:657px;width:24px;height:20px;background:#d2e7f8;"></div>
<div class="a" style="left:24px;top:657px;width:24px;height:20px;background:#d3f8dc;"></div>
<i class="dot" style="left:8.30px;top:665.50px;width:3.1px;height:3.1px;background:#ff9f0a"></i><i class="dot" style="left:13.30px;top:665.50px;width:3.1px;height:3.1px;background:#ff9f0a"></i><i class="dot" style="left:18.30px;top:665.50px;width:3.1px;height:3.1px;background:#ff9f0a"></i>
<i class="dot" style="left:32.30px;top:665.50px;width:3.1px;height:3.1px;background:#ff9f0a"></i><i class="dot" style="left:37.30px;top:665.50px;width:3.1px;height:3.1px;background:#ff9f0a"></i><i class="dot" style="left:42.30px;top:665.50px;width:3.1px;height:3.1px;background:#ff9f0a"></i>
<div class="t" style="left:53px;top:661px;font-size:13px;font-weight:bold;color:#000;letter-spacing:0.25px;">AudioRoomSection</div>
<div class="t" style="left:277px;top:661px;font-size:13px;color:#000;letter-spacing:0.1px;">0/23</div>
<div class="a" style="left:337px;top:0px;width:16px;height:669px;background:#fafafa;border-left:1px solid #ececec"></div>
<div class="a" style="left:341px;top:3px;width:8px;height:29px;background:#808080;border-radius:4px"></div>
</div>
<div class="a" style="left:384px;top:44px;width:1px;height:22px;background:#b4b4b4;"></div>
<div class="a" style="left:384px;top:66px;width:2px;height:716px;background:#a3a3a3;"></div>
<svg class="a" style="left:385px;top:44px" width="36" height="22" viewBox="385 44 36 22"><circle cx="393.9" cy="53.8" r="6.9" fill="#424242"/><circle cx="412" cy="53.8" r="6.9" fill="#424242"/><path d="M391.4 51.3 L396.4 56.3 M396.4 51.3 L391.4 56.3" stroke="#fff" stroke-width="2.2" stroke-linecap="round"/><path d="M410.9 52.9 V51.599999999999994 H415.6 V55.599999999999994 H414.6" fill="none" stroke="#fff" stroke-width="1.2"/><rect x="408.5" y="53.599999999999994" width="5.6" height="3.8" fill="none" stroke="#fff" stroke-width="1.3" rx="0.5"/></svg><div class="title" style="left:421px;top:49px;width:255px">Strings</div>
<div class="a" style="left:386px;top:65px;width:291px;height:2px;background:#a0a0a0;"></div>
<div class="a" style="left:386px;top:67px;width:290px;height:190px;background:#fff;"></div>
<div class="a" style="left:386px;top:67px;width:290px;height:17px;background:#ebebeb;"></div>
<div class="a" style="left:386px;top:84px;width:24px;height:24px;background:#d2e7f8;"></div>
<div class="a" style="left:410px;top:84px;width:24px;height:24px;background:#d3f8dc;"></div>
<i class="dot" style="left:394.50px;top:94.50px;width:3.1px;height:3.1px;background:#7a7a7a"></i><i class="dot" style="left:399.50px;top:94.50px;width:3.1px;height:3.1px;background:#7a7a7a"></i><i class="dot" style="left:404.50px;top:94.50px;width:3.1px;height:3.1px;background:#7a7a7a"></i>
<i class="dot" style="left:418.50px;top:94.50px;width:3.1px;height:3.1px;background:#7a7a7a"></i><i class="dot" style="left:423.50px;top:94.50px;width:3.1px;height:3.1px;background:#7a7a7a"></i><i class="dot" style="left:428.50px;top:94.50px;width:3.1px;height:3.1px;background:#7a7a7a"></i>
<div class="t" style="left:439px;top:90px;font-size:13px;color:#000;letter-spacing:0.1px;">Window</div>
<div class="a" style="left:386px;top:108px;width:24px;height:24px;background:#d2e7f8;"></div>
<div class="a" style="left:410px;top:108px;width:24px;height:24px;background:#d3f8dc;"></div>
<i class="dot" style="left:394.50px;top:118.50px;width:3.1px;height:3.1px;background:#7a7a7a"></i><i class="dot" style="left:399.50px;top:118.50px;width:3.1px;height:3.1px;background:#7a7a7a"></i><i class="dot" style="left:404.50px;top:118.50px;width:3.1px;height:3.1px;background:#7a7a7a"></i>
<i class="dot" style="left:418.50px;top:118.50px;width:3.1px;height:3.1px;background:#7a7a7a"></i><i class="dot" style="left:423.50px;top:118.50px;width:3.1px;height:3.1px;background:#7a7a7a"></i><i class="dot" style="left:428.50px;top:118.50px;width:3.1px;height:3.1px;background:#7a7a7a"></i>
<div class="t" style="left:439px;top:114px;font-size:13px;color:#000;letter-spacing:0.1px;">Title</div>
<div class="a" style="left:386px;top:132px;width:24px;height:24px;background:#d2e7f8;"></div>
<div class="a" style="left:410px;top:132px;width:24px;height:24px;background:#d3f8dc;"></div>
<i class="dot" style="left:394.50px;top:142.50px;width:3.1px;height:3.1px;background:#7a7a7a"></i><i class="dot" style="left:399.50px;top:142.50px;width:3.1px;height:3.1px;background:#7a7a7a"></i><i class="dot" style="left:404.50px;top:142.50px;width:3.1px;height:3.1px;background:#7a7a7a"></i>
<i class="dot" style="left:418.50px;top:142.50px;width:3.1px;height:3.1px;background:#7a7a7a"></i><i class="dot" style="left:423.50px;top:142.50px;width:3.1px;height:3.1px;background:#7a7a7a"></i><i class="dot" style="left:428.50px;top:142.50px;width:3.1px;height:3.1px;background:#7a7a7a"></i>
<div class="t" style="left:439px;top:138px;font-size:13px;color:#000;letter-spacing:0.1px;">Size</div>
<div class="a" style="left:386px;top:156px;width:290px;height:24px;background:#0550d6;"></div>
<i class="dot" style="left:394.50px;top:166.50px;width:3.1px;height:3.1px;background:#8f9dbb"></i><i class="dot" style="left:399.50px;top:166.50px;width:3.1px;height:3.1px;background:#8f9dbb"></i><i class="dot" style="left:404.50px;top:166.50px;width:3.1px;height:3.1px;background:#8f9dbb"></i>
<i class="dot" style="left:418.50px;top:166.50px;width:3.1px;height:3.1px;background:#8f9dbb"></i><i class="dot" style="left:423.50px;top:166.50px;width:3.1px;height:3.1px;background:#8f9dbb"></i><i class="dot" style="left:428.50px;top:166.50px;width:3.1px;height:3.1px;background:#8f9dbb"></i>
<div class="t" style="left:439px;top:162px;font-size:13px;color:#fff;letter-spacing:0.1px;">Color</div>
<div class="a" style="left:386px;top:180px;width:24px;height:24px;background:#d2e7f8;"></div>
<div class="a" style="left:410px;top:180px;width:24px;height:24px;background:#d3f8dc;"></div>
<i class="dot" style="left:394.50px;top:190.50px;width:3.1px;height:3.1px;background:#7a7a7a"></i><i class="dot" style="left:399.50px;top:190.50px;width:3.1px;height:3.1px;background:#7a7a7a"></i><i class="dot" style="left:404.50px;top:190.50px;width:3.1px;height:3.1px;background:#7a7a7a"></i>
<i class="dot" style="left:418.50px;top:190.50px;width:3.1px;height:3.1px;background:#7a7a7a"></i><i class="dot" style="left:423.50px;top:190.50px;width:3.1px;height:3.1px;background:#7a7a7a"></i><i class="dot" style="left:428.50px;top:190.50px;width:3.1px;height:3.1px;background:#7a7a7a"></i>
<div class="t" style="left:439px;top:186px;font-size:13px;color:#000;letter-spacing:0.1px;">Visible</div>
<div class="a" style="left:386px;top:204px;width:24px;height:24px;background:#d2e7f8;"></div>
<div class="a" style="left:410px;top:204px;width:24px;height:24px;background:#d3f8dc;"></div>
<i class="dot" style="left:394.50px;top:214.50px;width:3.1px;height:3.1px;background:#7a7a7a"></i><i class="dot" style="left:399.50px;top:214.50px;width:3.1px;height:3.1px;background:#7a7a7a"></i><i class="dot" style="left:404.50px;top:214.50px;width:3.1px;height:3.1px;background:#7a7a7a"></i>
<i class="dot" style="left:418.50px;top:214.50px;width:3.1px;height:3.1px;background:#7a7a7a"></i><i class="dot" style="left:423.50px;top:214.50px;width:3.1px;height:3.1px;background:#7a7a7a"></i><i class="dot" style="left:428.50px;top:214.50px;width:3.1px;height:3.1px;background:#7a7a7a"></i>
<div class="t" style="left:439px;top:210px;font-size:13px;color:#000;letter-spacing:0.1px;">Opacity</div>
<div class="t" style="left:438px;top:70px;font-size:12px;color:#262626;letter-spacing:0px;-webkit-text-stroke:0">Source text</div>
<div class="a" style="left:409px;top:69px;width:1px;height:13px;background:#cdcdcd;"></div>
<div class="a" style="left:433px;top:69px;width:1px;height:13px;background:#cdcdcd;"></div>
<div class="a" style="left:554px;top:69px;width:1px;height:13px;background:#cdcdcd;"></div>
<div class="a" style="left:675px;top:69px;width:1px;height:13px;background:#b0b0b0;"></div>
<svg class="a" style="left:386px;top:67px" width="50" height="17" viewBox="386 67 50 17"><path fill="none" stroke="#707070" stroke-width="1.3" d="M392.8 74 L396.9 77.6 L402.9 70.2 M416.8 74 L420.9 77.6 L426.9 70.2"/></svg>
<div class="a" style="left:677px;top:44px;width:1px;height:22px;background:#b4b4b4;"></div>
<svg class="a" style="left:678px;top:44px" width="36" height="22" viewBox="678 44 36 22"><circle cx="686.9" cy="53.8" r="6.9" fill="#424242"/><circle cx="705" cy="53.8" r="6.9" fill="#424242"/><path d="M684.4 51.3 L689.4 56.3 M689.4 51.3 L684.4 56.3" stroke="#fff" stroke-width="2.2" stroke-linecap="round"/><path d="M703.9 52.9 V51.599999999999994 H708.6 V55.599999999999994 H707.6" fill="none" stroke="#fff" stroke-width="1.2"/><rect x="701.5" y="53.599999999999994" width="5.6" height="3.8" fill="none" stroke="#fff" stroke-width="1.3" rx="0.5"/></svg><div class="title" style="left:714px;top:49px;width:556px">Sources and Forms</div>
<div class="a" style="left:678px;top:65px;width:593px;height:2px;background:#a0a0a0;"></div>
<div class="a" style="left:679px;top:67px;width:592px;height:190px;background:#fff;"></div>
<div class="a" style="left:676px;top:66px;width:3px;height:191px;background:#a3a3a3;"></div>
<div class="a" style="left:683px;top:147px;width:568px;height:16px;background:#e5effc;"></div>
<div class="a" style="left:679px;top:67px;width:574px;height:190px;overflow:hidden">
<div class="t" style="left:18px;top:2px;font-size:13px;color:#1a1a1a;letter-spacing:0.3px;">}</div>
<div class="t" style="left:18px;top:34px;font-size:13px;color:#1a1a1a;letter-spacing:0.3px;">Section {</div>
<div class="t" style="left:32px;top:50px;font-size:13px;color:#1a1a1a;letter-spacing:0.3px;">anchors.left: parent.left</div>
<div class="t" style="left:32px;top:66px;font-size:13px;color:#1a1a1a;letter-spacing:0.3px;">anchors.right: parent.right</div>
<div class="t" style="left:32px;top:82px;font-size:13px;color:#1a1a1a;letter-spacing:0.3px;">caption: qsTr("Color")</div>
<div class="t" style="left:32px;top:114px;font-size:13px;color:#1a1a1a;letter-spacing:0.3px;">ColorEditor {</div>
<div class="t" style="left:46px;top:130px;font-size:13px;color:#1a1a1a;letter-spacing:0.3px;">caption: qsTr("Color")</div>
<div class="t" style="left:46px;top:146px;font-size:13px;color:#1a1a1a;letter-spacing:0.3px;">backendValue: backendValues.color</div>
<div class="t" style="left:46px;top:162px;font-size:13px;color:#1a1a1a;letter-spacing:0.3px;">supportGradient: false</div>
<div class="t" style="left:32px;top:178px;font-size:13px;color:#1a1a1a;letter-spacing:0.3px;">}</div>
</div>
<div class="a" style="left:1253px;top:67px;width:18px;height:190px;background:#fafafa;border-left:1px solid #e2e2e2"></div>
<div class="a" style="left:1257px;top:170px;width:8px;height:18px;background:#808080;border-radius:4px"></div>
<div class="a" style="left:385px;top:257px;width:886px;height:3px;background:#a6a6a6;"></div>
<div class="a" style="left:386px;top:260px;width:885px;height:314px;background:#fff;"></div>
<div class="t" style="left:394px;top:272px;font-size:13px;font-weight:bold;color:#000;letter-spacing:0.25px;">Source text</div>
<div class="t" style="left:398px;top:300px;font-size:13px;color:#000;letter-spacing:0.1px;">Color</div>
<div class="a" style="left:1163px;top:266px;width:14px;height:13px;background:#fff;border:1px solid #c4c4c4;border-radius:3px"></div>
<div class="t" style="left:1181px;top:266px;font-size:13px;color:#000;letter-spacing:0.1px;">NCR mode</div>
<div class="a" style="left:388px;top:329px;width:863px;height:128px;background:#d2e8f8;"></div>
<div class="a" style="left:388px;top:459px;width:863px;height:115px;background:#d3f8de;"></div>
<div class="t" style="left:394px;top:336px;font-size:13px;font-weight:bold;color:#000;letter-spacing:0.25px;">Translation to Deutsch (Deutschland)</div>
<div class="a" style="left:393px;top:358px;width:853px;height:26px;background:#fff;border:1px solid #a4a4a4;border-top-color:#858585"></div>
<div class="t" style="left:394px;top:396px;font-size:13px;font-weight:bold;color:#000;letter-spacing:0.25px;">Translator comments for Deutsch (Deutschland)</div>
<div class="a" style="left:393px;top:418px;width:853px;height:26px;background:#fff;border:1px solid #a4a4a4;border-top-color:#858585"></div>
<div class="t" style="left:394px;top:466px;font-size:13px;font-weight:bold;color:#000;letter-spacing:0.25px;">Translation to français (France)</div>
<div class="a" style="left:393px;top:488px;width:853px;height:26px;background:#fff;border:1px solid #a4a4a4;border-top-color:#858585"></div>
<div class="t" style="left:394px;top:526px;font-size:13px;font-weight:bold;color:#000;letter-spacing:0.25px;">Translator comments for français (France)</div>
<div class="a" style="left:393px;top:548px;width:853px;height:26px;background:#fff;border:1px solid #a4a4a4;border-top-color:#858585;border-bottom:none"></div>
<div class="a" style="left:469px;top:364px;width:46px;height:18px;background:#fff;border:1px solid #d6d6d6;border-radius:1px;box-shadow:0 1px 3px rgba(0,0,0,.12)"></div>
<div class="t" style="left:471px;top:368px;font-size:11px;color:#333;letter-spacing:0.2px;">German</div>
<div class="a" style="left:1253px;top:260px;width:18px;height:314px;background:#fafafa;border-left:1px solid #e2e2e2"></div>
<div class="a" style="left:1257px;top:263px;width:8px;height:292px;background:#808080;border-radius:4px"></div>
<div class="a" style="left:385px;top:574px;width:886px;height:2px;background:#b0b0b0;"></div>
<svg class="a" style="left:385px;top:576px" width="36" height="22" viewBox="385 576 36 22"><circle cx="393.9" cy="585.8" r="6.9" fill="#424242"/><circle cx="412" cy="585.8" r="6.9" fill="#424242"/><path d="M391.4 583.3 L396.4 588.3 M396.4 583.3 L391.4 588.3" stroke="#fff" stroke-width="2.2" stroke-linecap="round"/><path d="M410.9 584.9 V583.5999999999999 H415.6 V587.5999999999999 H414.6" fill="none" stroke="#fff" stroke-width="1.2"/><rect x="408.5" y="585.5999999999999" width="5.6" height="3.8" fill="none" stroke="#fff" stroke-width="1.3" rx="0.5"/></svg><div class="title" style="left:421px;top:581px;width:239px">Phrases and guesses</div>
<div class="a" style="left:386px;top:597px;width:275px;height:1px;background:#a8a8a8;"></div>
<div class="a" style="left:386px;top:598px;width:275px;height:184px;background:#fff;"></div>
<div class="a" style="left:386px;top:598px;width:274px;height:18px;background:#ebebeb;"></div>
<div class="t" style="left:390px;top:602px;font-size:12px;color:#262626;letter-spacing:0px;-webkit-text-stroke:0">Source phrase</div>
<div class="t" style="left:490px;top:602px;font-size:12px;color:#262626;letter-spacing:0px;-webkit-text-stroke:0">Translation</div>
<div class="t" style="left:590px;top:602px;font-size:12px;color:#262626;letter-spacing:0px;-webkit-text-stroke:0">Definition</div>
<div class="a" style="left:485px;top:601px;width:1px;height:13px;background:#cdcdcd;"></div>
<div class="a" style="left:585px;top:601px;width:1px;height:13px;background:#cdcdcd;"></div>
<div class="a" style="left:386px;top:634px;width:274px;height:18px;background:#f0f1f0;"></div>
<div class="a" style="left:386px;top:670px;width:274px;height:18px;background:#f0f1f0;"></div>
<div class="a" style="left:386px;top:706px;width:274px;height:18px;background:#f0f1f0;"></div>
<div class="a" style="left:386px;top:742px;width:274px;height:18px;background:#f0f1f0;"></div>
<div class="a" style="left:386px;top:766px;width:274px;height:16px;background:#fafafa;border-top:1px solid #e6e6e6"></div>
<div class="a" style="left:389px;top:770px;width:245px;height:8px;background:#808080;border-radius:4px"></div>
<div class="a" style="left:660px;top:576px;width:2px;height:206px;background:#a3a3a3;"></div>
<div class="a" style="left:660px;top:576px;width:1px;height:22px;background:#b4b4b4;"></div>
<svg class="a" style="left:661px;top:576px" width="36" height="22" viewBox="661 576 36 22"><circle cx="669.9" cy="585.8" r="6.9" fill="#424242"/><circle cx="688" cy="585.8" r="6.9" fill="#424242"/><path d="M667.4 583.3 L672.4 588.3 M672.4 583.3 L667.4 588.3" stroke="#fff" stroke-width="2.2" stroke-linecap="round"/><path d="M686.9 584.9 V583.5999999999999 H691.6 V587.5999999999999 H690.6" fill="none" stroke="#fff" stroke-width="1.2"/><rect x="684.5" y="585.5999999999999" width="5.6" height="3.8" fill="none" stroke="#fff" stroke-width="1.3" rx="0.5"/></svg><div class="title" style="left:697px;top:581px;width:573px">Warnings</div>
<div class="a" style="left:662px;top:597px;width:609px;height:1px;background:#a8a8a8;"></div>
<div class="a" style="left:662px;top:598px;width:607px;height:184px;background:#fff;"></div>
<div class="a" style="left:1269px;top:598px;width:2px;height:184px;background:#a8a8a8;"></div>
<div class="a" style="left:0px;top:781px;width:1271px;height:2px;background:#8e8e8e;"></div>
<div class="a" style="left:0px;top:783px;width:1271px;height:25px;background:#ececec;"></div>
<div class="t" style="left:1162px;top:790px;font-size:13px;color:#000;letter-spacing:0.1px;">1/17943</div>
<div class="t" style="left:1223px;top:790px;font-size:13px;color:#000;letter-spacing:0.1px;">MOD</div>
<div class="a" style="left:1268px;top:44px;width:1px;height:738px;background:#cdcdcd;"></div>
<div class="a" style="left:1269px;top:0px;width:1px;height:808px;background:#a9a9a9;"></div>
<div class="a" style="left:1270px;top:0px;width:1px;height:808px;background:#d4d4d4;"></div>
<svg class="a" style="left:0;top:788px" width="20" height="20" viewBox="0 0 20 20"><path d="M0 8 A12 12 0 0 0 12 20 H0 Z" fill="#c8c8c8"/><path d="M0 8 A12 12 0 0 0 12 20" fill="none" stroke="#a8a8a8" stroke-width="1"/></svg>
<svg class="a" style="left:1251px;top:788px" width="20" height="20" viewBox="0 0 20 20"><path d="M20 8 A12 12 0 0 1 8 20 H20 Z" fill="#d8d8d8"/><path d="M18.5 0 V8 A11 11 0 0 1 7.5 20" fill="none" stroke="#b2b2b2" stroke-width="1"/></svg>
</div></body></html>
